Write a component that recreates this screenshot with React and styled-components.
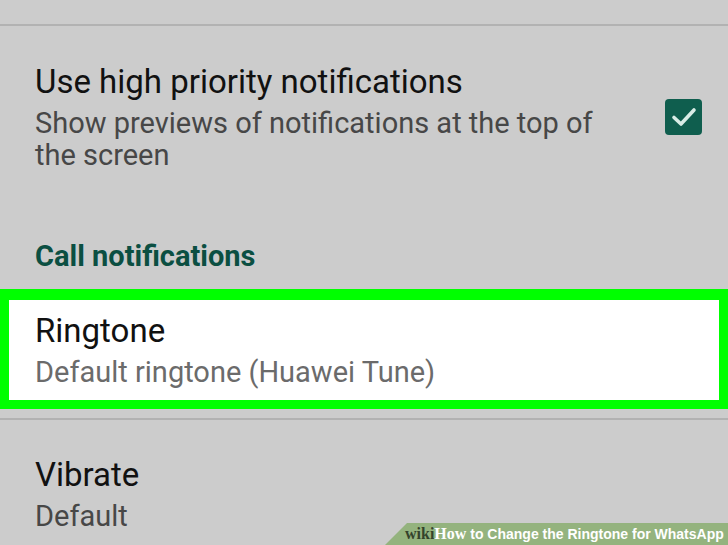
import React from 'react';
import styled, { createGlobalStyle } from 'styled-components';

const GlobalStyle = createGlobalStyle`
  html, body {
    margin: 0;
    padding: 0;
    background: #cccccc;
  }
  body {
    font-family: Roboto, "Noto Sans", "Liberation Sans", sans-serif;
  }
`;

const Screen = styled.div`
  position: relative;
  width: 728px;
  height: 545px;
  overflow: hidden;
  background: #cccccc;
  display: flex;
  flex-direction: column;
`;

const Divider = styled.div`
  height: 2px;
  background: #b2b2b2;
  margin-top: ${({ top }) => top || 0}px;
  flex-shrink: 0;
`;

const Setting = styled.div`
  display: flex;
  align-items: center;
  justify-content: space-between;
  padding: ${({ pad }) => pad || '0 26px 0 35px'};
  margin-top: ${({ top }) => top || 0}px;
  background: ${({ highlighted }) => (highlighted ? '#ffffff' : 'transparent')};
  border: ${({ highlighted }) => (highlighted ? '9px solid #00ff00' : 'none')};
  border-top-width: ${({ highlighted }) => (highlighted ? '11px' : '0')};
  flex-shrink: 0;
`;

const TextBlock = styled.div`
  display: flex;
  flex-direction: column;
`;

const Title = styled.div`
  font-size: 33px;
  color: #111111;
  line-height: 40px;
`;

const Summary = styled.div`
  font-size: 29px;
  color: ${({ light }) => (light ? '#6b6b6b' : '#474747')};
  line-height: 32px;
  margin-top: 5px;
  max-width: ${({ narrow }) => (narrow ? '590px' : 'none')};
`;

const SectionHeader = styled.div`
  font-size: 29px;
  font-weight: 700;
  color: #0b4f42;
  padding: 0 0 0 35px;
  margin-top: ${({ top }) => top}px;
  line-height: 32px;
`;

const CheckBox = styled.div`
  width: 37px;
  height: 36px;
  border-radius: 4px;
  background: #0f5e4e;
  display: flex;
  align-items: center;
  justify-content: center;
  flex-shrink: 0;
`;

const Banner = styled.div`
  position: absolute;
  right: 0;
  bottom: 0;
  height: 22px;
  width: 343px;
  background: #94b37e;
  clip-path: polygon(22px 0, 100% 0, 100% 100%, 0 100%);
  display: flex;
  align-items: center;
  padding-left: 20px;
  box-sizing: border-box;
  font-family: "Liberation Sans", Arial, sans-serif;
  font-size: 14px;
  font-weight: 700;
  color: #ffffff;
  white-space: pre;
`;

const Wiki = styled.span`
  font-family: "Liberation Serif", "DejaVu Serif", serif;
  font-size: 16px;
  color: #34432b;
`;

const How = styled.span`
  font-family: "Liberation Serif", "DejaVu Serif", serif;
  font-size: 16px;
  color: #ffffff;
`;

export default function App() {
  return (
    <>
      <GlobalStyle />
      <Screen>
        <Divider top={24} />
        <Setting pad="36px 26px 0 35px">
          <TextBlock>
            <Title>Use high priority notifications</Title>
            <Summary narrow>Show previews of notifications at the top of the screen</Summary>
          </TextBlock>
          <CheckBox>
            <svg width="26" height="22" viewBox="0 0 26 22">
              <path d="M3 11.5 L10 18 L23 4" fill="none" stroke="#d8ece6" strokeWidth="3.6" strokeLinecap="round" strokeLinejoin="round" />
            </svg>
          </CheckBox>
        </Setting>
        <SectionHeader top={69}>Call notifications</SectionHeader>
        <Setting highlighted top={17} pad="11px 20px 12px 26px">
          <TextBlock>
            <Title>Ringtone</Title>
            <Summary light>Default ringtone (Huawei Tune)</Summary>
          </TextBlock>
        </Setting>
        <Divider top={9} />
        <Setting pad="35px 26px 0 35px">
          <TextBlock>
            <Title>Vibrate</Title>
            <Summary>Default</Summary>
          </TextBlock>
        </Setting>
        <Banner>
          <Wiki>wiki</Wiki>
          <How>How</How>
          {' to Change the Ringtone for WhatsApp'}
        </Banner>
      </Screen>
    </>
  );
}
